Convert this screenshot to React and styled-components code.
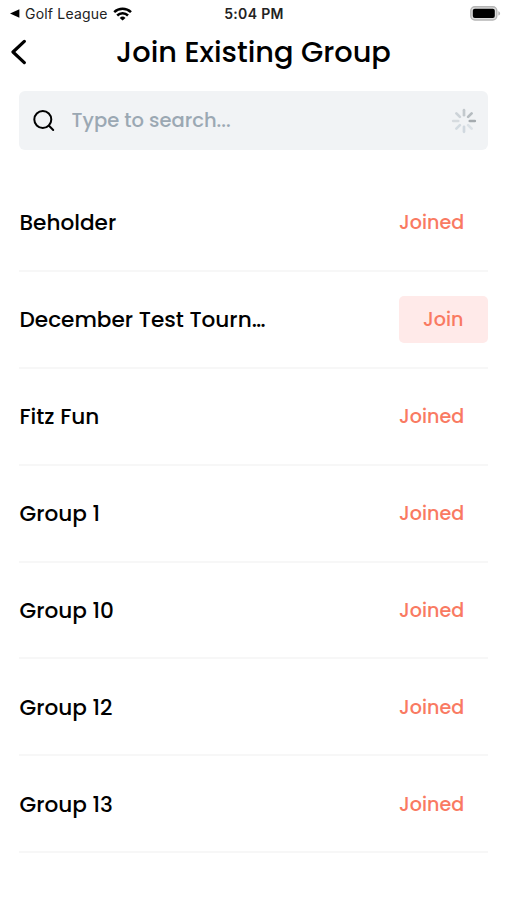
import React, { useState } from "react";
import styled, { createGlobalStyle } from "styled-components";

const groups = [
  { id: 1, name: "Beholder", joined: true },
  { id: 2, name: "December Test Tourn…", joined: false },
  { id: 3, name: "Fitz Fun", joined: true },
  { id: 4, name: "Group 1", joined: true },
  { id: 5, name: "Group 10", joined: true },
  { id: 6, name: "Group 12", joined: true },
  { id: 7, name: "Group 13", joined: true },
];

const spokes = [
  { angle: 0, color: "#c3c9cd" },
  { angle: 45, color: "#b6bcc0" },
  { angle: 90, color: "#a5abaf" },
  { angle: 135, color: "#dbe1e6" },
  { angle: 180, color: "#d0d8df" },
  { angle: 225, color: "#d3dbe1" },
  { angle: 270, color: "#d6dbdf" },
  { angle: 315, color: "#cdd3d8" },
];

const WifiIcon = () => (
  <svg width="20" height="14" viewBox="0 0 20 14" fill="none" stroke="#000" strokeWidth="2.5">
    <path d="M1.2 5.2a12.2 12.2 0 0 1 16.8 0" />
    <path d="M4.2 8.5a7.7 7.7 0 0 1 10.8 0" />
    <path d="M9.6 13.6 6.7 10.9a4.2 4.2 0 0 1 5.8 0Z" fill="#000" stroke="none" />
  </svg>
);

const BatteryIcon = () => (
  <svg width="31" height="15" viewBox="0 0 31 15">
    <rect x="0.8" y="0.8" width="26" height="13.2" rx="4" fill="#ddd" stroke="#b5b5b5" strokeWidth="1.4" />
    <rect x="2.8" y="2.8" width="22" height="9.2" rx="2" fill="#000" />
    <path d="M28.3 5.2c2.4.7 2.4 3.7 0 4.4Z" fill="#b5b5b5" />
  </svg>
);

const Spinner = () => (
  <svg width="26" height="26" viewBox="-13 -13 26 26" strokeWidth="2.7" strokeLinecap="round">
    {spokes.map(({ angle, color }) => (
      <line key={angle} y1="-5.8" y2="-10.8" stroke={color} transform={`rotate(${angle})`} />
    ))}
  </svg>
);

const App = () => {
  const [search, setSearch] = useState("");

  return (
    <Screen>
      <GlobalStyle />
      <StatusBar>
        <BackToApp>
          <svg width="10" height="9" viewBox="0 0 10 9">
            <path d="M0 4.5 9.4 0.2v8.6Z" />
          </svg>
          <span>Golf League</span>
          <WifiIcon />
        </BackToApp>
        <Clock>5:04 PM</Clock>
        <BatteryIcon />
      </StatusBar>
      <Header>
        <BackButton aria-label="Back">
          <svg width="16" height="26" viewBox="0 0 16 26" fill="none" stroke="#000" strokeWidth="3.2" strokeLinecap="round" strokeLinejoin="round">
            <path d="M13.3 2.4 2 13l11.3 10.6" />
          </svg>
        </BackButton>
        <Title>Join Existing Group</Title>
      </Header>
      <SearchBox>
        <svg width="22" height="22" viewBox="0 0 22 22" fill="none" stroke="#000" strokeWidth="2" strokeLinecap="round">
          <circle cx="9.8" cy="9.5" r="8.5" />
          <path d="m16 15.8 4.2 4.2" />
        </svg>
        <SearchInput
          value={search}
          onChange={(e) => setSearch(e.target.value)}
          placeholder="Type to search..."
        />
        <Spinner />
      </SearchBox>
      <GroupList>
        {groups.map((group) => (
          <GroupRow key={group.id}>
            <GroupName>{group.name}</GroupName>
            <JoinButton $joined={group.joined}>{group.joined ? "Joined" : "Join"}</JoinButton>
          </GroupRow>
        ))}
      </GroupList>
    </Screen>
  );
};

const GlobalStyle = createGlobalStyle`
  * {
    box-sizing: border-box;
  }
  body {
    margin: 0;
    background: #fff;
    color: #000;
    font-family: Poppins, Inter, sans-serif;
  }
  button, input {
    font: inherit;
    border: 0;
    padding: 0;
    background: none;
  }
  svg {
    display: block;
    flex-shrink: 0;
  }
`;

const Screen = styled.main`
  height: 900px;
  overflow: hidden;
  background: #fff;
`;

const StatusBar = styled.div`
  display: grid;
  grid-template-columns: 1fr auto 1fr;
  align-items: center;
  height: 27px;
  padding: 0 6px 0 10px;
  font-family: Inter, sans-serif;
  > :last-child {
    justify-self: end;
  }
`;

const BackToApp = styled.div`
  display: flex;
  align-items: center;
  font-size: 14px;
  letter-spacing: 0.2px;
  color: #222;
  span {
    margin: 0 5px;
  }
`;

const Clock = styled.time`
  margin-left: -3px;
  font-size: 14px;
  font-weight: 600;
  letter-spacing: 0.35px;
  color: #222;
`;

const Header = styled.header`
  display: grid;
  grid-template-columns: 48px 1fr 48px;
  align-items: center;
  height: 50px;
`;

const BackButton = styled.button`
  padding-left: 11px;
`;

const Title = styled.h1`
  margin: 0;
  text-align: center;
  white-space: nowrap;
  font-size: 28.8px;
  font-weight: 500;
  line-height: 40px;
`;

const SearchBox = styled.label`
  display: flex;
  align-items: center;
  height: 59px;
  margin: 14px 19px 0;
  padding: 0 11px 0 14px;
  border-radius: 6px;
  background: #f1f3f5;
`;

const SearchInput = styled.input`
  flex: 1;
  min-width: 0;
  margin-left: 16.6px;
  font-size: 19.5px;
  font-weight: 500;
  outline: none;
  &::placeholder {
    color: #9ba8b3;
    opacity: 1;
  }
`;

const GroupList = styled.ul`
  margin: 25px 19px 0;
  padding: 0;
  list-style: none;
`;

const GroupRow = styled.li`
  display: flex;
  align-items: center;
  justify-content: space-between;
  height: 96.9px;
  border-bottom: 2px solid #f7f7f7;
`;

const GroupName = styled.span`
  margin-left: 0.5px;
  padding-top: 1.6px;
  font-size: 21.6px;
  font-weight: 500;
  line-height: 32px;
  white-space: nowrap;
`;

const JoinButton = styled.button`
  width: 89px;
  height: 47px;
  padding-top: 1px;
  padding-right: ${({ $joined }) => ($joined ? "25.5px" : "0.5px")};
  border-radius: 5px;
  background: ${({ $joined }) => ($joined ? "transparent" : "#ffeae9")};
  color: #f97a62;
  font-size: 19.1px;
  font-weight: 500;
  white-space: nowrap;
`;

export default App;
